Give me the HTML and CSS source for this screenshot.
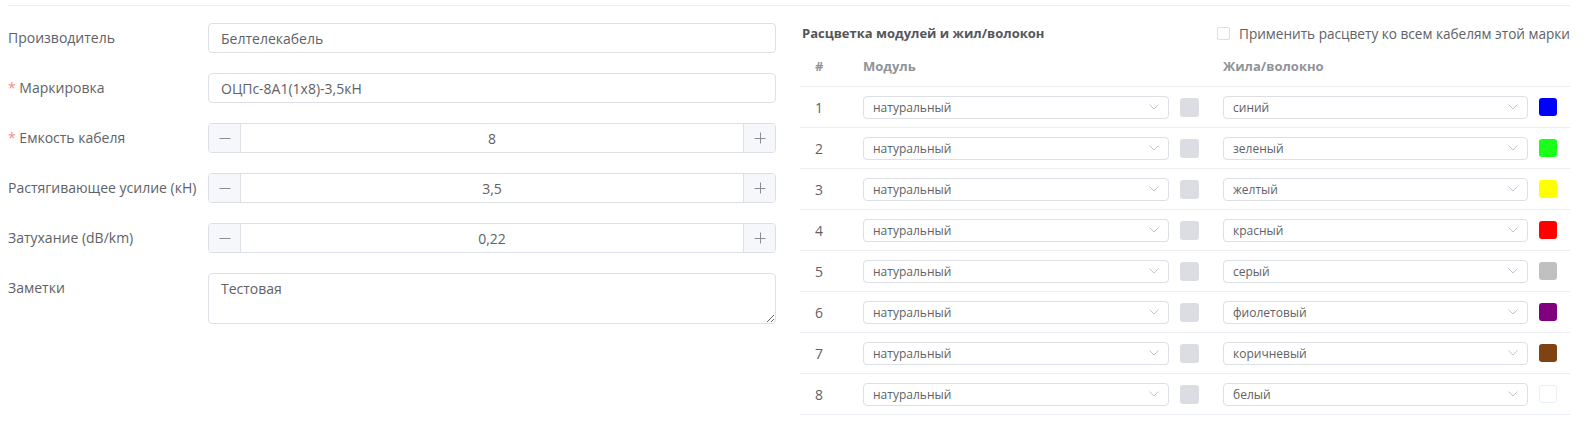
FILE: index.html
```html
<!DOCTYPE html>
<html>
<head>
    <title>Кабель</title>
    <link rel="stylesheet" href="styles.css">
</head>
<body>
    <div class="page">
        <div class="layout">
            <form class="cable-form">
                <div class="form-row">
                    <label class="form-label">Производитель</label>
                    <input type="text" class="text-input" value="Белтелекабель">
                </div>
                <div class="form-row">
                    <label class="form-label"><span class="req">*</span> Маркировка</label>
                    <input type="text" class="text-input" value="ОЦПс-8А1(1х8)-3,5кН">
                </div>
                <div class="form-row">
                    <label class="form-label"><span class="req">*</span> Емкость кабеля</label>
                    <div class="number-input">
                        <span class="num-btn minus"><svg width="12" height="12" viewBox="0 0 12 12"><path d="M0.5 6.5h11" stroke="#8a8d93" stroke-width="1"/></svg></span>
                        <input type="text" class="num-field" value="8">
                        <span class="num-btn plus"><svg width="12" height="12" viewBox="0 0 12 12"><path d="M0.5 6.5h11M6.5 0.5v11" stroke="#8a8d93" stroke-width="1"/></svg></span>
                    </div>
                </div>
                <div class="form-row">
                    <label class="form-label">Растягивающее усилие (кН)</label>
                    <div class="number-input">
                        <span class="num-btn minus"><svg width="12" height="12" viewBox="0 0 12 12"><path d="M0.5 6.5h11" stroke="#8a8d93" stroke-width="1"/></svg></span>
                        <input type="text" class="num-field" value="3,5">
                        <span class="num-btn plus"><svg width="12" height="12" viewBox="0 0 12 12"><path d="M0.5 6.5h11M6.5 0.5v11" stroke="#8a8d93" stroke-width="1"/></svg></span>
                    </div>
                </div>
                <div class="form-row">
                    <label class="form-label">Затухание (dB/km)</label>
                    <div class="number-input">
                        <span class="num-btn minus"><svg width="12" height="12" viewBox="0 0 12 12"><path d="M0.5 6.5h11" stroke="#8a8d93" stroke-width="1"/></svg></span>
                        <input type="text" class="num-field" value="0,22">
                        <span class="num-btn plus"><svg width="12" height="12" viewBox="0 0 12 12"><path d="M0.5 6.5h11M6.5 0.5v11" stroke="#8a8d93" stroke-width="1"/></svg></span>
                    </div>
                </div>
                <div class="form-row top">
                    <label class="form-label">Заметки</label>
                    <textarea class="notes">Тестовая</textarea>
                </div>
            </form>

            <section class="coloring">
                <div class="coloring-head">
                    <h3 class="coloring-title">Расцветка модулей и жил/волокон</h3>
                    <label class="apply-all"><span class="checkbox"></span>Применить расцвету ко всем кабелям этой марки</label>
                </div>

                <div class="color-table">
                    <div class="ct-row ct-header">
                        <div class="ct-num">#</div>
                        <div class="ct-module">Модуль</div>
                        <div class="ct-fiber">Жила/волокно</div>
                    </div>
                    <div id="rows"></div>
                </div>
            </section>
        </div>
    </div>

    <script src="table.js"></script>
</body>
</html>
```

FILE: table.js
```js
var fibers = [
    ['синий', '#0000ff'],
    ['зеленый', '#1aff1a'],
    ['желтый', '#ffff00'],
    ['красный', '#ff0000'],
    ['серый', '#c0c0c0'],
    ['фиолетовый', '#800080'],
    ['коричневый', '#7f4212'],
    ['белый', '#ffffff']
];

var chevron = '<svg class="chevron" width="10" height="6" viewBox="0 0 10 6"><path d="M0.5 0.5L5 5L9.5 0.5" fill="none" stroke="#c0c4cc" stroke-width="1"/></svg>';

var html = '';
fibers.forEach(function (f, i) {
    html += '<div class="ct-row">' +
        '<div class="ct-num">' + (i + 1) + '</div>' +
        '<div class="ct-module"><div class="select"><span>натуральный</span>' + chevron + '</div><span class="swatch module-swatch"></span></div>' +
        '<div class="ct-fiber"><div class="select"><span>' + f[0] + '</span>' + chevron + '</div>' +
        '<span class="swatch' + (f[1] == '#ffffff' ? ' white' : '') + '" style="background-color: ' + f[1] + '"></span></div>' +
        '</div>';
});
document.getElementById('rows').innerHTML = html;
```

FILE: styles.css
```css
* {
    box-sizing: border-box;
}

body {
    margin: 0;
    font-family: 'Open Sans', 'Noto Sans', Arial, sans-serif;
    font-size: 14px;
    color: #606266;
    background-color: #ffffff;
}

.page {
    padding: 5px 18px 0 8px;
}

.layout {
    display: grid;
    grid-template-columns: 768px 770px;
    column-gap: 24px;
    border-top: 1px solid #ebeef5;
    padding-top: 17px;
}

/* left form */

.form-row {
    display: flex;
    align-items: center;
    height: 30px;
    margin-bottom: 20px;
}

.form-row.top {
    align-items: flex-start;
    height: auto;
}

.form-label {
    width: 200px;
    flex-shrink: 0;
    line-height: 30px;
    color: #606266;
}

.req {
    color: #f78989;
}

.text-input {
    flex: 1;
    height: 30px;
    padding: 0 12px;
    border: 1px solid #dcdfe6;
    border-radius: 4px;
    font-family: inherit;
    font-size: 14px;
    color: #606266;
    outline: none;
}

.number-input {
    flex: 1;
    display: flex;
    height: 30px;
    border: 1px solid #dcdfe6;
    border-radius: 4px;
    overflow: hidden;
}

.num-btn {
    width: 32px;
    display: flex;
    align-items: center;
    justify-content: center;
    background-color: #f5f7fa;
}

.num-btn.minus {
    border-right: 1px solid #dcdfe6;
}

.num-btn.plus {
    border-left: 1px solid #dcdfe6;
}

.num-field {
    flex: 1;
    min-width: 0;
    border: none;
    text-align: center;
    font-family: inherit;
    font-size: 14px;
    color: #606266;
    outline: none;
}

.notes {
    flex: 1;
    height: 51px;
    padding: 5px 12px;
    border: 1px solid #dcdfe6;
    border-radius: 4px;
    font-family: inherit;
    font-size: 14px;
    line-height: 20px;
    color: #606266;
    outline: none;
}

/* right table */

.coloring-head {
    display: flex;
    justify-content: space-between;
    align-items: center;
    height: 20px;
    padding-left: 2px;
}

.coloring-title {
    margin: 0;
    font-size: 13px;
    font-weight: 700;
    color: #54565b;
}

.apply-all {
    display: flex;
    align-items: center;
    font-size: 13.6px;
    color: #606266;
}

.checkbox {
    width: 13px;
    height: 13px;
    margin-right: 9px;
    border: 1px solid #dcdfe6;
    border-radius: 2px;
    background-color: white;
}

.color-table {
    margin-top: 5px;
}

.ct-row {
    display: grid;
    grid-template-columns: 63px 360px 1fr;
    height: 41px;
    border-bottom: 1px solid #ebeef5;
    align-items: center;
}

.ct-header {
    height: 39px;
    padding-bottom: 3px;
    font-size: 13px;
    font-weight: 700;
    color: #909399;
}

.ct-num {
    padding-left: 15px;
}

.ct-row .ct-num {
    font-size: 14px;
}

.ct-header .ct-num {
    font-size: 13px;
}

.ct-module,
.ct-fiber {
    display: flex;
    align-items: center;
    gap: 11px;
}

.ct-module {
    padding-right: 24px;
}

.ct-fiber {
    padding-right: 13px;
}

.select {
    flex: 1;
    height: 23px;
    display: flex;
    align-items: center;
    justify-content: space-between;
    padding: 0 9px;
    border: 1px solid #dcdfe6;
    border-radius: 4px;
    font-size: 12px;
    color: #606266;
    background-color: white;
}

.swatch {
    width: 18px;
    height: 18px;
    border-radius: 3px;
    flex-shrink: 0;
}

.module-swatch {
    width: 19px;
    height: 19px;
    background-color: #dcdde2;
}

.swatch.white {
    border: 1px solid #ebeef5;
}
```
